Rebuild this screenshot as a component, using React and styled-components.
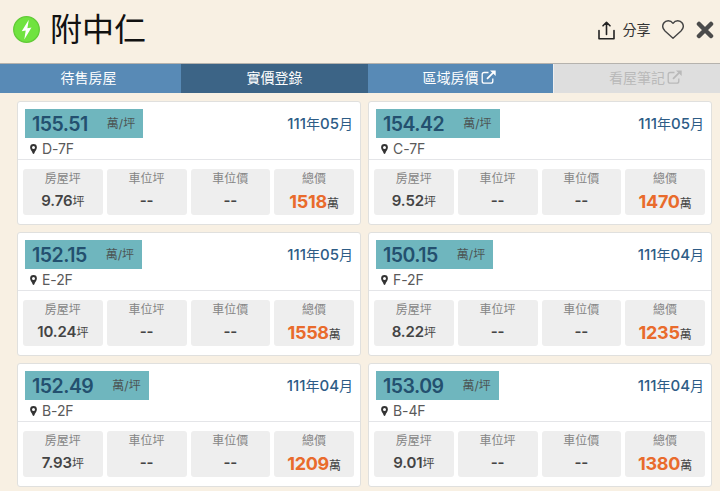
import React from 'react'
import styled, { createGlobalStyle } from 'styled-components'


const GlobalStyle = createGlobalStyle`
    * {
        box-sizing: border-box;
    }
    body {
        margin: 0;
        background: #f8f0e3;
        font-family: Inter, "Noto Sans CJK TC", sans-serif;
        overflow: hidden;
    }
`
const Page = styled.div`
    width: 720px;
    height: 491px;
    overflow: hidden;
    background: #f8f0e3;
`
const Header = styled.header`
    display: flex;
    align-items: center;
    height: 64px;
    padding: 0 6.5px 4px 13px;
    border-bottom: 1px solid #b5b2ad;
`
const Title = styled.h1`
    flex: 1;
    margin: 0 0 0 10px;
    font-size: 32px;
    font-weight: 400;
    line-height: 40px;
    color: #111;
`
const Share = styled.div`
    display: flex;
    align-items: center;
    gap: 8px;
    margin-right: 11px;
    padding-top: 1px;
    font-size: 14px;
    line-height: 20px;
    color: #333;
`
const Icon = styled.svg`
    display: block;
    flex: none;
`
const HeartIcon = styled(Icon)`
    margin-right: 12px;
`
const Tabs = styled.nav`
    display: grid;
    grid-template-columns: 181px 187px 185px 1fr;
    height: 29px;
`
const Tab = styled.div`
    display: flex;
    align-items: center;
    justify-content: center;
    gap: 2px;
    padding: 0 ${props => props.$right || 0}px 2px ${props => props.$left || 0}px;
    font-size: 14px;
    line-height: 20px;
    color: ${props => props.$disabled ? '#b9b9b9' : '#fff'};
    background: ${props => props.$disabled ? '#dedede' : props.$active ? '#3c6486' : '#588ab6'};
    border-left: ${props => props.$disabled ? '1px solid #eee' : 'none'};
`
const List = styled.main`
    display: grid;
    grid-template-columns: 344px 344px;
    grid-auto-rows: 124px;
    gap: 7px;
    padding: 8px 0 0 17px;
`
const Card = styled.section`
    background: #fff;
    border: 1px solid #e0e0de;
    border-radius: 3px;
`
const CardTop = styled.div`
    display: flex;
    justify-content: space-between;
    height: 58px;
    padding: 7px 7px 0;
    border-bottom: 1px solid #e4e5e8;
`
const Badge = styled.div`
    display: flex;
    align-items: center;
    gap: 19px;
    width: max-content;
    height: 29px;
    padding: 1px 8px 0 7px;
    background: #6fb6be;
`
const UnitPrice = styled.span`
    font-size: 19.5px;
    font-weight: 600;
    letter-spacing: -0.5px;
    color: #23506f;
`
const Unit = styled.span`
    font-size: 12px;
    line-height: 18px;
    color: #4c5454;
`
const Place = styled.div`
    display: flex;
    align-items: center;
    gap: 5px;
    height: 21px;
    padding-left: 5px;
    font-size: 14px;
    letter-spacing: -0.1px;
    color: #5a5a5a;
`
const Month = styled.div`
    height: 28px;
    font-size: 15px;
    font-weight: 500;
    line-height: 30px;
    color: #2d5c86;
`
const Cjk = styled.span`
    font-size: 14px;
    font-weight: 400;
`
const Stats = styled.div`
    display: grid;
    grid-template-columns: repeat(4, 1fr);
    gap: 4px;
    padding: 9px 6px 0 5px;
`
const Stat = styled.div`
    height: 46px;
    border-radius: 3px;
    background: #eee;
    text-align: center;
`
const StatLabel = styled.div`
    height: 19px;
    font-size: 12px;
    line-height: 19px;
    color: #858585;
`
const StatValue = styled.div`
    height: 26px;
    font-size: ${props => props.$total ? 18 : 15}px;
    font-weight: ${props => props.$total ? 700 : 600};
    line-height: ${props => props.$total ? 28 : 25}px;
    letter-spacing: ${props => props.$total ? -0.3 : -0.1}px;
    color: ${props => props.$total ? '#e96b2c' : '#444'};
`
const StatUnit = styled.span`
    font-size: 12px;
    font-weight: 400;
    letter-spacing: 0;
    color: #444;
`

const deals = [
  { price: '155.51', month: '05', place: 'D-7F', area: '9.76', total: '1518' },
  { price: '154.42', month: '05', place: 'C-7F', area: '9.52', total: '1470' },
  { price: '152.15', month: '05', place: 'E-2F', area: '10.24', total: '1558' },
  { price: '150.15', month: '04', place: 'F-2F', area: '8.22', total: '1235' },
  { price: '152.49', month: '04', place: 'B-2F', area: '7.93', total: '1209' },
  { price: '153.09', month: '04', place: 'B-4F', area: '9.01', total: '1380' },
]

const ExternalIcon = () => (
  <Icon width="15" height="15" viewBox="0 0 15 15" fill="none" stroke="currentColor">
    <path d="M7.5 2.5H3.2Q1.2 2.5 1.2 4.5V11.2Q1.2 13.2 3.2 13.2H9.8Q11.8 13.2 11.8 11.2V8.5" strokeWidth="1.3" />
    <path d="M6 8.8L12 2.8" strokeWidth="1.8" />
    <path d="M9 .4H14.7V6.1Z" fill="currentColor" stroke="none" />
  </Icon>
)

const PinIcon = () => (
  <Icon width="7" height="10" viewBox="0 0 7 10">
    <path fillRule="evenodd" fill="#333" d="M3.5 0A3.4 3.4 0 0 0 .1 3.4C.1 5.4 2.2 7.2 2.6 9.3Q3.5 10.6 4.4 9.3C4.8 7.2 6.9 5.4 6.9 3.4A3.4 3.4 0 0 0 3.5 0ZM3.5 1.9A1.5 1.5 0 1 1 3.5 4.9A1.5 1.5 0 1 1 3.5 1.9Z" />
  </Icon>
)

const DealCard = ({ deal }) => {
  return (
    <Card>
      <CardTop>
        <div>
          <Badge>
            <UnitPrice>{deal.price}</UnitPrice>
            <Unit>萬/坪</Unit>
          </Badge>
          <Place><PinIcon />{deal.place}</Place>
        </div>
        <Month>111<Cjk>年</Cjk>{deal.month}<Cjk>月</Cjk></Month>
      </CardTop>
      <Stats>
        <Stat>
          <StatLabel>房屋坪</StatLabel>
          <StatValue>{deal.area}<StatUnit>坪</StatUnit></StatValue>
        </Stat>
        <Stat>
          <StatLabel>車位坪</StatLabel>
          <StatValue>--</StatValue>
        </Stat>
        <Stat>
          <StatLabel>車位價</StatLabel>
          <StatValue>--</StatValue>
        </Stat>
        <Stat>
          <StatLabel>總價</StatLabel>
          <StatValue $total>{deal.total}<StatUnit>萬</StatUnit></StatValue>
        </Stat>
      </Stats>
    </Card>
  )
}

const App = () => {
  return (
    <Page>
      <GlobalStyle />
      <Header>
        <Icon width="27" height="27" viewBox="0 0 27 27">
          <circle cx="13.5" cy="13.5" r="12.8" fill="#70e33f" stroke="#62cb37" strokeWidth="1.3" />
          <path d="M15.8 3.8L8.7 15.2L12.7 14.6L11.3 23.5L18.5 11.6L14.4 12.3Z" fill="#fff" />
        </Icon>
        <Title>附中仁</Title>
        <Share>
          <Icon width="17" height="19" viewBox="0 0 17 19" fill="none" stroke="#222" strokeWidth="1.6" strokeLinecap="round" strokeLinejoin="round">
            <path d="M1 9.5V17.7H16V9.5M8.5 13.5V1.3M5 4.8L8.5 1.3L12 4.8" />
          </Icon>
          分享
        </Share>
        <HeartIcon width="22" height="19" viewBox="0 0 22 19" fill="none" stroke="#444" strokeWidth="1.4" strokeLinejoin="round">
          <path d="M11 3.3C8.5-.2 3.8.1 1.8 3C.1 5.6.6 8.7 3 11.1L11 18.2L19 11.1C21.4 8.7 21.9 5.6 20.2 3C18.2.1 13.5-.2 11 3.3Z" />
        </HeartIcon>
        <Icon width="18" height="18" viewBox="0 0 18 18" stroke="#4b4b4b" strokeWidth="4.5" strokeLinecap="round">
          <path d="M3 3L15 15M15 3L3 15" />
        </Icon>
      </Header>
      <Tabs>
        <Tab $right={4}>待售房屋</Tab>
        <Tab $active>實價登錄</Tab>
        <Tab $right={3}>區域房價<ExternalIcon /></Tab>
        <Tab $left={17} $disabled>看屋筆記<ExternalIcon /></Tab>
      </Tabs>
      <List>
        {deals.map(deal => <DealCard key={deal.place} deal={deal} />)}
      </List>
    </Page>
  )
}

export default App
